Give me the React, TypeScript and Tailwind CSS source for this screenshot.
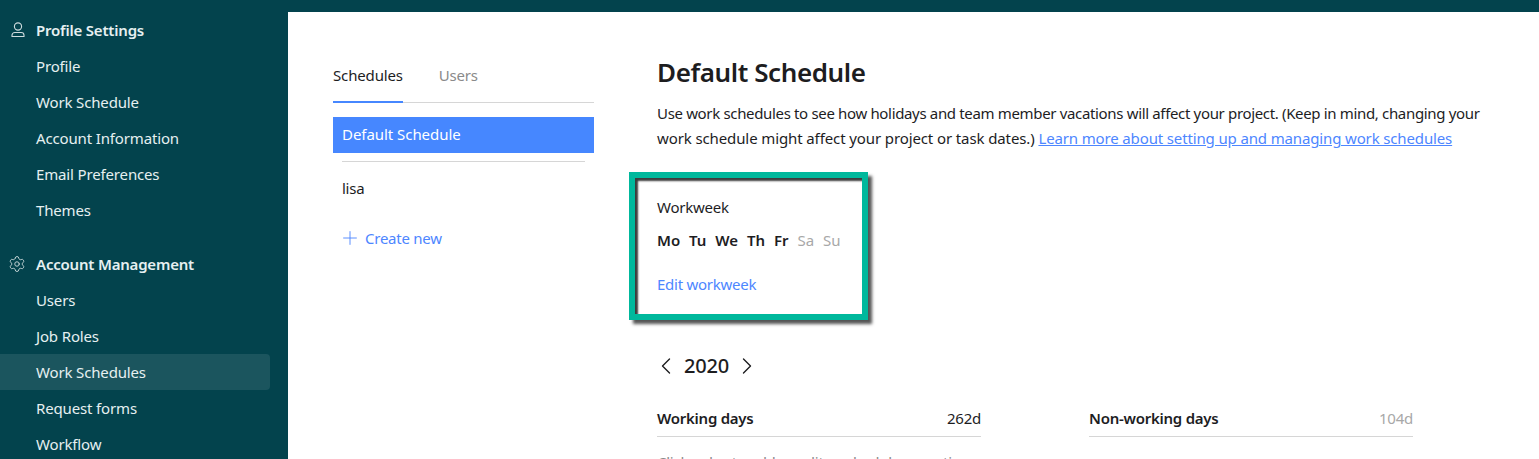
import React from "react";
import { Settings, Plus, ChevronLeft, ChevronRight } from "lucide-react";

const font = "font-['Noto_Sans','Open_Sans',sans-serif]";

function NavGroup({ icon, title, items, active }: { icon: React.ReactNode; title: string; items: string[]; active?: string }) {
  return (
    <div className="flex flex-col">
      <div className="h-9 flex items-center relative pl-9 font-semibold text-[#e6f0f1] tracking-[-0.2px]">
        <span className="absolute left-[8px] top-[9px]">{icon}</span>
        {title}
      </div>
      {items.map((t) => (
        <div key={t} className={`h-9 flex items-center pl-9 w-[270px] rounded-r text-[#e6f0f1] tracking-[-0.15px] ${t === active ? "bg-[#1b555e]" : ""}`}>
          {t}
        </div>
      ))}
    </div>
  );
}

export default function App() {
  return (
    <div className={`${font} h-[459px] w-[1539px] overflow-hidden flex flex-col bg-[#03434d] text-[15px] tracking-[-0.25px]`}>
      <div className="h-3 shrink-0" />
      <div className="flex flex-1 min-h-0">
        <aside className="w-[288px] shrink-0 flex flex-col gap-[18px]">
          <NavGroup
            icon={
              <svg width="18" height="18" viewBox="0 0 18 18" fill="none" stroke="#cfdcde" strokeWidth="1.1">
                <circle cx="10" cy="5.5" r="3.6" />
                <path d="M4 15.5v-1.2a2.8 2.8 0 0 1 2.8-2.8h6.4a2.8 2.8 0 0 1 2.8 2.8v1.2z" />
              </svg>
            }
            title="Profile Settings"
            items={["Profile", "Work Schedule", "Account Information", "Email Preferences", "Themes"]}
          />
          <NavGroup
            icon={<Settings size={18} strokeWidth={1.2} color="#cfdcde" />}
            title="Account Management"
            items={["Users", "Job Roles", "Work Schedules", "Request forms", "Workflow"]}
            active="Work Schedules"
          />
        </aside>
        <main className="flex-1 bg-white flex text-[#1d1d1f] min-w-0">
          <section className="w-[261px] ml-[45px] shrink-0 pt-[46px]">
            <div className="flex gap-9 h-[45px] border-b border-[#d6d6d6]">
              <div className="h-[45px] border-b-2 border-[#4687ff] pt-[6px] tracking-[-0.15px]">Schedules</div>
              <div className="pt-[6px] text-[#8a8a8a]">Users</div>
            </div>
            <div className="mt-[14px] h-9 bg-[#4687ff] text-white flex items-center px-[9px] tracking-[-0.05px] pb-[1px]">Default Schedule</div>
            <div className="mx-[9px] mt-2 border-t border-[#d6d6d6]" />
            <div className="h-9 mt-[8px] flex items-center px-[9px]">lisa</div>
            <div className="mt-[14px] h-9 flex items-center gap-1 px-[9px] text-[#4d86ff]">
              <Plus size={22} strokeWidth={1} className="-ml-[3px]" />
              Create new
            </div>
          </section>
          <section className="ml-[63px] w-[820px] shrink-0 pt-[42px]">
            <h1 className="text-[26px] leading-9 font-semibold tracking-[-0.4px]">Default Schedule</h1>
            <p className="mt-[11px] leading-6 whitespace-nowrap">
              <span className="block tracking-[-0.34px]">Use work schedules to see how holidays and team member vacations will affect your project. (Keep in mind, changing your</span>
              <span className="block mt-[1px] tracking-[-0.11px]">
                work schedule might affect your project or task dates.){" "}
                <span className="text-[#4d86ff] underline tracking-[-0.14px]">Learn more about setting up and managing work schedules</span>
              </span>
            </p>
            <div className="mt-[22px] -ml-[28px] w-[239px] h-[148px] border-[6px] border-[#00b89c] shadow-[inset_3px_3px_2px_#3c3c3c,4px_4px_3px_#555] pl-[22px] pt-[17px]">
              <div className="leading-6">Workweek</div>
              <div className="mt-[9px] flex gap-[9px] leading-6 font-semibold tracking-[-0.05px]">
                <span>Mo</span><span>Tu</span><span>We</span><span>Th</span><span>Fr</span>
                <span className="font-normal text-[#a8a8a8]">Sa</span>
                <span className="font-normal text-[#a8a8a8]">Su</span>
              </div>
              <div className="mt-[20px] leading-6 text-[#4d86ff]">Edit workweek</div>
            </div>
            <div className="mt-[28px] flex items-center gap-1 h-9">
              <ChevronLeft size={28} strokeWidth={1.2} className="-ml-[5px]" />
              <span className="text-[20px] font-medium tracking-[-0.2px]">2020</span>
              <ChevronRight size={28} strokeWidth={1.2} />
            </div>
            <div className="mt-[16px] flex gap-[108px]">
              <div className="w-[324px] h-[37px] border-b border-[#d6d6d6] flex justify-between items-center">
                <span className="font-semibold">Working days</span>
                <span>262d</span>
              </div>
              <div className="w-[324px] h-[37px] border-b border-[#d6d6d6] flex justify-between items-center">
                <span className="font-semibold">Non-working days</span>
                <span className="text-[#a8a8a8]">104d</span>
              </div>
            </div>
            <div className="mt-[13px] leading-6 text-[#8a8a8a]">Click a day to add or edit a schedule exception</div>
          </section>
        </main>
      </div>
    </div>
  );
}
